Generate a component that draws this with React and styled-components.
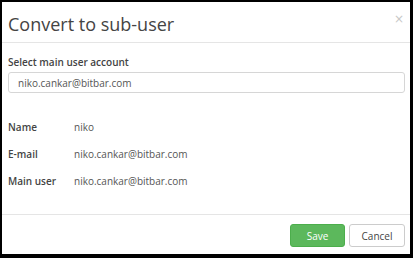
import React from "react"
import styled, { createGlobalStyle } from "styled-components"

const GlobalStyle = createGlobalStyle`
  html, body {
    margin: 0;
    padding: 0;
    background: #000;
  }
  body {
    font-family: "Open Sans", "Liberation Sans", sans-serif;
    color: #555;
  }
`

const Page = styled.div`
  width: 413px;
  height: 258px;
  padding: 2px 3px 4px 2px;
  box-sizing: border-box;
`

const Modal = styled.div`
  background: #fff;
  width: 408px;
  height: 252px;
  display: flex;
  flex-direction: column;
`

const Header = styled.div`
  display: flex;
  justify-content: space-between;
  align-items: flex-start;
  height: 41px;
  box-sizing: border-box;
  padding: 9px 6px 0 6px;
  border-bottom: 1px solid #e5e5e5;
`

const Title = styled.h4`
  margin: 0;
  font-size: 18px;
  font-weight: 400;
  line-height: 26px;
  color: #444;
`

const Close = styled.button`
  border: 0;
  background: none;
  padding: 0;
  margin-top: 1px;
  font-family: "DejaVu Sans", sans-serif;
  font-size: 12px;
  line-height: 14px;
  color: #c8c8c8;
  cursor: pointer;
`

const Body = styled.div`
  flex: 1;
  padding: 11px 5px 0 6px;
`

const FieldLabel = styled.label`
  display: block;
  font-size: 10px;
  font-weight: 600;
  line-height: 16px;
  color: #444;
  margin-bottom: 2px;
`

const Input = styled.input`
  display: block;
  width: 100%;
  box-sizing: border-box;
  height: 21px;
  padding: 0 9px;
  border: 1px solid #d6d6d6;
  border-radius: 3px;
  font-family: inherit;
  font-size: 10px;
  color: #555;
  outline: none;
`

const InfoList = styled.dl`
  margin: 26px 0 0;
  display: grid;
  grid-template-columns: 66px 1fr;
  row-gap: 11px;
  font-size: 10px;
  line-height: 16px;
`

const InfoLabel = styled.dt`
  font-weight: 600;
  color: #444;
`

const InfoValue = styled.dd`
  margin: 0;
  color: #555;
`

const Footer = styled.div`
  display: flex;
  justify-content: flex-end;
  gap: 4px;
  border-top: 1px solid #e5e5e5;
  padding: 9px 5px 7px;
`

const Button = styled.button`
  height: 23px;
  min-width: ${props => props.width}px;
  box-sizing: border-box;
  border-radius: 3px;
  font-family: inherit;
  font-size: 10px;
  padding: 0 10px;
  cursor: pointer;
  border: 1px solid ${props => (props.primary ? "#4cae4c" : "#ccc")};
  background: ${props => (props.primary ? "#5cb85c" : "#fff")};
  color: ${props => (props.primary ? "#fff" : "#444")};
`

const rows = [
  ["Name", "niko"],
  ["E-mail", "niko.cankar@bitbar.com"],
  ["Main user", "niko.cankar@bitbar.com"],
]

const App = () => (
  <>
    <GlobalStyle />
    <Page>
      <Modal>
        <Header>
          <Title>Convert to sub-user</Title>
          <Close aria-label="Close">×</Close>
        </Header>
        <Body>
          <FieldLabel>Select main user account</FieldLabel>
          <Input defaultValue="niko.cankar@bitbar.com" />
          <InfoList>
            {rows.map(([label, value]) => (
              <React.Fragment key={label}>
                <InfoLabel>{label}</InfoLabel>
                <InfoValue>{value}</InfoValue>
              </React.Fragment>
            ))}
          </InfoList>
        </Body>
        <Footer>
          <Button primary width={55}>Save</Button>
          <Button width={56}>Cancel</Button>
        </Footer>
      </Modal>
    </Page>
  </>
)

export default App
